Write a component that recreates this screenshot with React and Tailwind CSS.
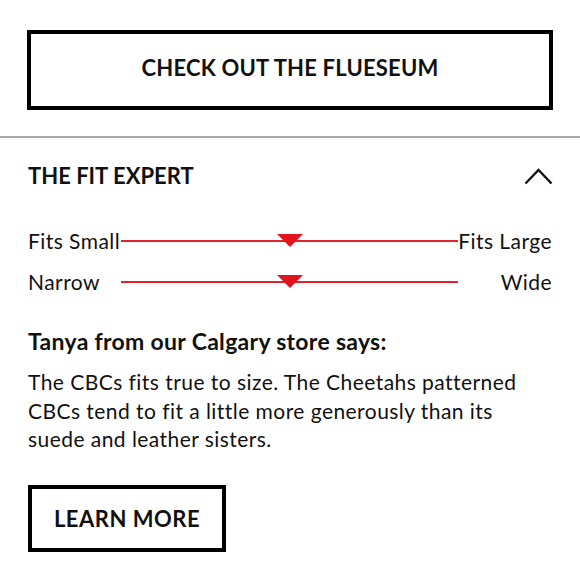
import React from "react";

const fitScales = [
    { left: "Fits Small", right: "Fits Large" },
    { left: "Narrow", right: "Wide" },
];

function FitScale({ left, right }) {
    return (
        <div className="grid grid-cols-[93px_1fr_94px] items-center h-[41px] text-[21px] tracking-[0.45px]">
            <span className="leading-none whitespace-nowrap">{left}</span>
            <div className="relative h-[2px] bg-[#e2222c]">
                <svg
                    width="26"
                    height="13"
                    viewBox="0 0 26 13"
                    className="absolute left-1/2 -translate-x-1/2 top-[-6px]"
                >
                    <polygon points="0,0 26,0 13,13" fill="#e3131e" />
                </svg>
            </div>
            <span className="leading-none text-right whitespace-nowrap">{right}</span>
        </div>
    );
}

export default function App() {
    return (
        <div className="w-[580px] h-[580px] bg-white text-[#111] font-['Lato','Noto_Sans',sans-serif] overflow-hidden">
            <div className="px-[27px] pt-[30px]">
                <button
                    type="button"
                    className="w-full h-[80px] border-4 border-black flex items-center justify-center pb-[6px] text-[22px] font-bold tracking-[0.2px]"
                >
                    CHECK OUT THE FLUESEUM
                </button>
            </div>

            <div className="mt-[26px] h-[2px] bg-[#a8a8a8]" />

            <div className="px-[28px]">
                {/* Fit expert header */}
                <div className="flex items-center justify-between mt-[26px] h-[24px]">
                    <h3 className="text-[22px] font-bold leading-none">THE FIT EXPERT</h3>
                    <svg width="29" height="17" viewBox="0 0 29 17" className="mr-[-1px]">
                        <polyline
                            points="1.5,15.5 14.5,2 27.5,15.5"
                            fill="none"
                            stroke="#111"
                            strokeWidth="2.4"
                        />
                    </svg>
                </div>

                <div className="mt-[32px]">
                    {fitScales.map((scale, i) => (
                        <FitScale key={i} left={scale.left} right={scale.right} />
                    ))}
                </div>

                <p className="mt-[25px] text-[23px] font-bold leading-[28px] tracking-[0.3px]">
                    Tanya from our Calgary store says:
                </p>
                <p className="mt-[13px] text-[21px] leading-[28.5px] tracking-[0.45px]">
                    The CBCs fits true to size. The Cheetahs patterned CBCs tend to fit a little more generously than its suede and leather sisters.
                </p>

                <button
                    type="button"
                    className="mt-[31px] w-[198px] h-[67px] border-4 border-black flex items-center justify-center text-[22px] font-bold tracking-[0.5px]"
                >
                    LEARN MORE
                </button>
            </div>
        </div>
    );
}
